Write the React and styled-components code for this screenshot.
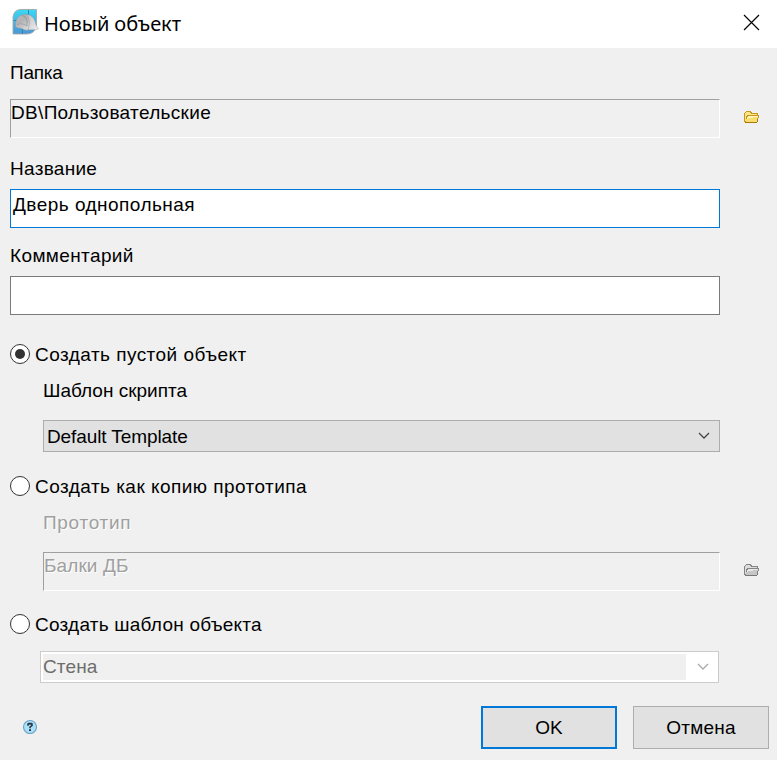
import React from "react";
import styled, { createGlobalStyle, css } from "styled-components";

const GlobalStyle = createGlobalStyle`
  * { box-sizing: border-box; }
  body { margin: 0; background: #f0f0f0; }
`;

const Dialog = styled.div`
  width: 777px;
  height: 760px;
  display: flex;
  flex-direction: column;
  overflow: hidden;
  background: #f0f0f0;
  color: #000;
  font: 19px/21px "Liberation Sans", Arial, sans-serif;
`;

const TitleBar = styled.header`
  flex: none;
  height: 48px;
  display: flex;
  align-items: flex-start;
  padding: 8px 17px 0 11px;
  background: #fff;
`;

const Title = styled.h1`
  margin: 2px 0 0 5px;
  font: 400 20px/27px "Noto Sans", "Open Sans", sans-serif;
  letter-spacing: -0.08px;
`;

const CloseButton = styled.button`
  margin: 6px 0 0 auto;
  padding: 0;
  border: 0;
  background: none;
  height: 17px;
`;

const Icon = styled.svg`
  display: block;
`;

const Body = styled.main`
  display: flex;
  flex-direction: column;
  padding: 14px 8px 0 10px;
`;

const Text = styled.span`
  white-space: pre;
  letter-spacing: ${(p) => p.$track || 0}px;
`;

const disabledText = css`
  color: #a0a0a0;
  text-shadow: 1px 1px 0 #fff;
`;

const Label = styled.div`
  height: 21px;
  margin-top: ${(p) => p.$gap || 0}px;
  margin-left: ${(p) => (p.$indent ? 33 : 0)}px;
  ${(p) => p.$disabled && disabledText}
`;

const FieldRow = styled.div`
  display: flex;
  align-items: flex-start;
  margin-top: ${(p) => p.$gap}px;
  margin-left: ${(p) => (p.$indent ? 33 : 0)}px;
`;

const SunkenField = styled.div`
  flex: none;
  width: ${(p) => p.$width}px;
  height: 39px;
  padding-top: 2px;
  border: 1px solid;
  border-color: #a0a0a0 #fff #fff #a0a0a0;
  ${(p) => p.$disabled && disabledText}
`;

const TextField = styled.div`
  width: 710px;
  height: 39px;
  padding: 4px 0 0 2px;
  border: 1px solid ${(p) => (p.$focused ? "#0078d7" : "#7a7a7a")};
  background: #fff;
`;

const BrowseButton = styled.button`
  margin: 11px 0 0 24px;
  padding: 0;
  border: 0;
  background: none;
  height: 14px;
`;

const RadioRow = styled.div`
  display: flex;
  height: 21px;
  margin-top: ${(p) => p.$gap}px;
`;

const RadioCircle = styled.span`
  flex: none;
  width: 20px;
  height: 20px;
  margin-right: 5px;
  display: grid;
  place-items: center;
  border: 1px solid #333;
  border-radius: 50%;
  background: #fff;
  &::after {
    content: "";
    width: 10px;
    height: 10px;
    border-radius: 50%;
    background: ${(p) => (p.$checked ? "#333" : "transparent")};
  }
`;

const Select = styled.div`
  width: 677px;
  height: 32px;
  margin: 19px 0 0 33px;
  display: flex;
  justify-content: space-between;
  padding: 5px 9px 0 3px;
  border: 1px solid #adadad;
  background: #e1e1e1;
`;

const DisabledCombo = styled.div`
  width: 679px;
  height: 32px;
  margin: 16px 0 0 30px;
  display: flex;
  padding: 2px 9px 2px 2px;
  border: 1px solid #ccc;
  background: #fff;
  color: #6d6d6d;
`;

const ComboValue = styled.div`
  width: 643px;
  margin-right: 11px;
  padding-top: 2px;
  background: #f0f0f0;
`;

const Drop = styled.span`
  margin-top: ${(p) => p.$top}px;
`;

const Footer = styled.footer`
  display: flex;
  gap: 16px;
  margin-top: 23px;
`;

const HelpButton = styled.button`
  height: 15px;
  margin: 13px auto 0 12px;
  padding: 0;
  border: 0;
  background: none;
`;

const PushButton = styled.button`
  width: 136px;
  height: 43px;
  padding: 0;
  border: ${(p) => (p.$primary ? "2px solid #0078d7" : "1px solid #adadad")};
  background: #e1e1e1;
  color: #000;
  font: inherit;
`;

const AppIcon = () => (
  <Icon width="28" height="28" viewBox="0 0 28 28">
    <defs>
      <linearGradient id="tile" x1="0" y1="0" x2="0" y2="1">
        <stop offset="0" stopColor="#3cd8f4" />
        <stop offset="1" stopColor="#4b96d4" />
      </linearGradient>
      <linearGradient id="shell" x1="0" y1="0" x2=".6" y2="1">
        <stop offset="0" stopColor="#b9babc" />
        <stop offset=".5" stopColor="#b2b2b4" />
        <stop offset="1" stopColor="#d6d6d8" />
      </linearGradient>
      <linearGradient id="brim" x1="0" y1="0" x2="1" y2="1">
        <stop offset="0" stopColor="#bcbcbe" />
        <stop offset="1" stopColor="#efeff0" />
      </linearGradient>
    </defs>
    <path d="M9 1.500H25.500V17Q24 26 16 26H2V9Q3 2 9 1.500Z" fill="url(#tile)" stroke="#a5a8aa" strokeWidth=".9" />
    <path d="M17.500 2V7M11.500 20V26M2.500 12.500H6" stroke="#2882ae" strokeWidth=".9" />
    <path d="M14 6.500C21 6 24 11 25 17L27.500 20.500C26 22.500 21 21.500 17 22L14 19Z" fill="url(#brim)" stroke="#8d9195" strokeWidth=".4" />
    <path d="M4.500 18C4 11 8 6.500 15 6.500C18 9 19 14 18 18L17 22C14 23 10 19.500 8 20C6 20 4.700 19 4.500 18Z" fill="url(#shell)" stroke="#92969a" strokeWidth=".5" />
    <path d="M11 7.500Q15 8 16 12V18" fill="none" stroke="#828487" strokeWidth=".6" />
    <path d="M6 17Q10 14 16 18" fill="none" stroke="#929396" strokeWidth=".6" />
  </Icon>
);

const FolderIcon = ({ edge, back, fill, shine, dark }) => (
  <Icon width="16" height="14" viewBox="0 0 16 14" shapeRendering="crispEdges">
    <path d="M2 1H7V2H8V3H14V5H15V8H14V12H13V13H1V12H0V3H1V2H2Z" fill={edge} />
    <path d="M2 2H6V3H7V4H13V5H3V6H2V11H1V3H2Z" fill={back} />
    <path d="M4 6H14V8H13V12H2V9H3V7H4Z" fill={fill} />
    <path d="M4 6H14V7H4ZM3 7H4V9H3ZM4 7H9V8H4Z" fill={shine} />
    <path d="M1 12H13V13H1ZM13 9H14V12H13Z" fill={dark} />
  </Icon>
);

const Chevron = ({ color, top }) => (
  <Drop $top={top}>
    <Icon width="12" height="8" viewBox="0 0 12 8">
      <path d="M1 1L6 6L11 1" fill="none" stroke={color} strokeWidth="1.3" />
    </Icon>
  </Drop>
);

const HelpIcon = () => (
  <Icon width="16" height="15" viewBox="0 0 16 15">
    <circle cx="8" cy="8" r="6.500" fill="#abe0fb" stroke="#6ba3c3" strokeWidth="1.1" />
    <path d="M6 6.800V5H7V4.500H9V5H10V6.500L8 8V9.300" fill="none" stroke="#24333c" strokeWidth="1.5" />
    <path d="M7 10.300H9V12H7Z" fill="#24333c" />
  </Icon>
);

export default function App() {
  return (
    <Dialog>
      <GlobalStyle />
      <TitleBar>
        <AppIcon />
        <Title>Новый объект</Title>
        <CloseButton aria-label="Закрыть">
          <Icon width="17" height="17" viewBox="0 0 17 17">
            <path d="M1 1L16 16M16 1L1 16" stroke="#000" strokeWidth="1.15" />
          </Icon>
        </CloseButton>
      </TitleBar>
      <Body>
        <Label><Text $track={-0.25}>Папка</Text></Label>
        <FieldRow $gap={16}>
          <SunkenField $width={710}><Text $track={0.32}>DB\Пользовательские</Text></SunkenField>
          <BrowseButton aria-label="Выбрать папку">
            <FolderIcon edge="#c6961f" back="#fbe68a" fill="#fadd70" shine="#fff6bd" dark="#a87806" />
          </BrowseButton>
        </FieldRow>
        <Label $gap={20}><Text $track={0.28}>Название</Text></Label>
        <FieldRow $gap={10}>
          <TextField $focused><Text $track={0.47}>Дверь однопольная</Text></TextField>
        </FieldRow>
        <Label $gap={17}><Text $track={0.38}>Комментарий</Text></Label>
        <FieldRow $gap={10}><TextField /></FieldRow>
        <RadioRow $gap={29}>
          <RadioCircle $checked />
          <Text $track={0.46}>Создать пустой объект</Text>
        </RadioRow>
        <Label $indent $gap={15}><Text>Шаблон скрипта</Text></Label>
        <Select>
          <Text $track={-0.1}>Default Template</Text>
          <Chevron color="#444" top={6} />
        </Select>
        <RadioRow $gap={24}>
          <RadioCircle />
          <Text $track={0.46}>Создать как копию прототипа</Text>
        </RadioRow>
        <Label $indent $gap={15} $disabled><Text $track={0.7}>Прототип</Text></Label>
        <FieldRow $indent $gap={19}>
          <SunkenField $width={677} $disabled><Text $track={0.1}>Балки ДБ</Text></SunkenField>
          <BrowseButton aria-label="Выбрать прототип">
            <FolderIcon edge="#858585" back="#dcdcdc" fill="#c6c6c6" shine="#e8e8e8" dark="#777" />
          </BrowseButton>
        </FieldRow>
        <RadioRow $gap={23}>
          <RadioCircle />
          <Text $track={0.23}>Создать шаблон объекта</Text>
        </RadioRow>
        <DisabledCombo>
          <ComboValue><Text $track={0.15}>Стена</Text></ComboValue>
          <Chevron color="#aaa" top={9} />
        </DisabledCombo>
        <Footer>
          <HelpButton aria-label="Справка"><HelpIcon /></HelpButton>
          <PushButton $primary><Text>OK</Text></PushButton>
          <PushButton><Text $track={0.2}>Отмена</Text></PushButton>
        </Footer>
      </Body>
    </Dialog>
  );
}
